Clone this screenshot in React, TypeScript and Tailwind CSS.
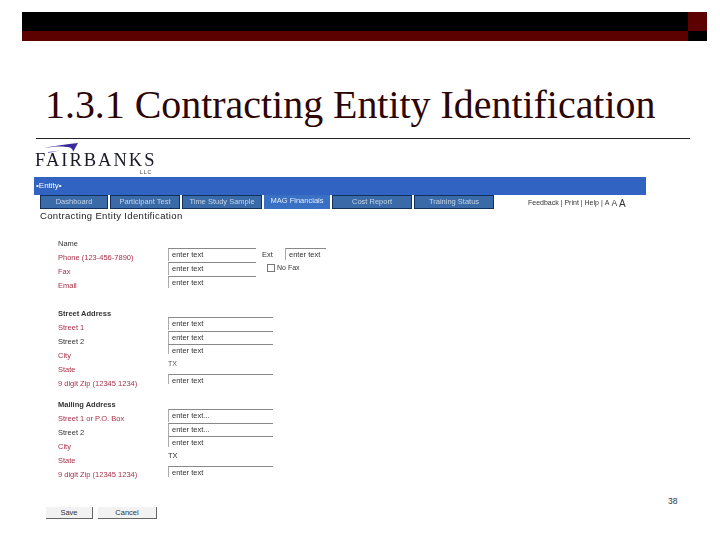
import React from "react";

const sans = "font-['Liberation_Sans',Arial,sans-serif]";

function Label({ text, red, bold, mt = "mt-0" }: { text: string; red?: boolean; bold?: boolean; mt?: string }) {
  return (
    <div className={`h-[14px] leading-[14px] text-[7.5px] whitespace-nowrap ${mt} ${red ? "text-[#a8304a]" : "text-[#333]"} ${bold ? "font-bold" : ""}`}>
      {text}
    </div>
  );
}

function Field({ w, h = "h-[13px]", text = "enter text", mt = "mt-px" }: { w: string; h?: string; text?: string; mt?: string }) {
  return (
    <div className={`${w} ${h} ${mt} border-t border-l border-t-[#888] border-l-[#aaa] pl-[3px] text-[7.5px] leading-[12px] text-[#333] overflow-hidden whitespace-nowrap`}>
      {text}
    </div>
  );
}

const tabs: { t: string; w: string; active?: boolean }[] = [
  { t: "Dashboard", w: "w-[68px]" },
  { t: "Participant Test", w: "w-[70px]" },
  { t: "Time Study Sample", w: "w-[80px]" },
  { t: "MAG Financials", w: "w-[66px]", active: true },
  { t: "Cost Report", w: "w-[80px]" },
  { t: "Training Status", w: "w-[80px]" },
];

export default function App() {
  return (
    <div className="relative w-[720px] h-[540px] overflow-hidden bg-white pt-3">
      {/* decorative header */}
      <div className="flex ml-[22px]">
        <div className="w-[666px]">
          <div className="h-[19px] bg-black" />
          <div className="h-[10px] bg-[#5c0000]" />
        </div>
        <div className="w-[19px]">
          <div className="h-[19px] bg-[#5c0000]" />
          <div className="h-[10px] bg-black" />
        </div>
      </div>

      {/* title */}
      <h1 className="mt-[42px] ml-[45px] h-[44px] text-[39.9px] leading-[44px] font-normal text-[#2c0505] whitespace-nowrap font-['Liberation_Serif','Times_New_Roman',serif]">
        1.3.1 Contracting Entity Identification
      </h1>
      <div className="mt-[11px] ml-[36px] w-[654px] h-px bg-[#222]" />

      {/* screenshot of form */}
      <div className={`ml-[34px] w-[612px] blur-[0.45px] ${sans}`}>
        {/* logo */}
        <div className="relative h-[38px]">
          <svg className="absolute left-[10px] top-[3px]" width="36" height="12" viewBox="0 0 36 12">
            <path d="M0 6 C10 4 22 2 34 1 L29 10 C29 7 27 5 22 5 C14 4 8 5 0 6Z" fill="#3a2a9c" />
            <path d="M4 10 L16 8.5 L4 11Z" fill="#6a5cc0" />
          </svg>
          <div className="absolute left-px top-[14px] text-[18.5px] leading-[15px] tracking-[2px] text-[#1a1a2a] whitespace-nowrap font-['Liberation_Serif',serif]">
            FAIRBANKS
          </div>
          <div className="absolute left-[106px] top-[30px] text-[5px] leading-[6px] tracking-[1px] text-[#333]">LLC</div>
        </div>

        {/* blue bar */}
        <div className="h-[18px] bg-[#3063c2] pl-[2px] text-[8px] leading-[17px] text-white">•Entity•</div>

        {/* tabs */}
        <div className="flex items-start">
          <div className="flex ml-[6px] gap-[2px]">
            {tabs.map((tab) => (
              <div
                key={tab.t}
                className={`${tab.w} h-[14px] text-center text-[7.5px] leading-[12px] whitespace-nowrap text-[#c4d4e8] ${
                  tab.active ? "bg-[#3a70c4] text-[#e4ecf6]" : "bg-[#3a6ba8] border border-[#12305c]"
                }`}
              >
                {tab.t}
              </div>
            ))}
          </div>
          <div className="ml-[34px] flex items-center h-[16px] text-[7px] text-[#333] whitespace-nowrap">
            Feedback | Print | Help |
            <span className="ml-[2px] text-[7px]">A</span>
            <span className="ml-[2px] text-[8.5px]">A</span>
            <span className="ml-[2px] text-[10px]">A</span>
          </div>
        </div>

        <div className="ml-[6px] mt-[-1px] text-[9.5px] leading-[12px] tracking-[0.35px] text-[#222]">Contracting Entity Identification</div>

        {/* form columns */}
        <div className="flex mt-[15px] ml-[24px]">
          <div className="w-[110px]">
            <Label text="Name" />
            <Label text="Phone (123-456-7890)" red />
            <Label text="Fax" red />
            <Label text="Email" red />
            <Label text="Street Address" bold mt="mt-[14px]" />
            <Label text="Street 1" red />
            <Label text="Street 2" />
            <Label text="City" red />
            <Label text="State" red />
            <Label text="9 digit Zip (12345 1234)" red />
            <Label text="Mailing Address" bold mt="mt-[7px]" />
            <Label text="Street 1 or P.O. Box" red />
            <Label text="Street 2" />
            <Label text="City" red />
            <Label text="State" red />
            <Label text="9 digit Zip (12345 1234)" red />
          </div>

          <div className="mt-[11px]">
            <div className="flex h-[13px]">
              <Field w="w-[88px]" mt="mt-0" />
              <span className="ml-[6px] w-[23px] text-[7.5px] leading-[13px] text-[#333]">Ext</span>
              <Field w="w-[41px]" h="h-[12px]" mt="mt-0" />
            </div>
            <div className="flex h-[14px]">
              <Field w="w-[88px]" />
              <div className="ml-[11px] mt-[3px] flex items-start text-[7px] leading-[8px] text-[#333]">
                <span className="w-[8px] h-[8px] border border-[#777] mr-[2px]" />
                No Fax
              </div>
            </div>
            <Field w="w-[88px]" h="h-[12px]" />

            <Field w="w-[105px]" mt="mt-[29px]" />
            <Field w="w-[105px]" />
            <Field w="w-[105px]" h="h-[10px]" mt="mt-0" />
            <div className="mt-[4px] h-[12px] text-[7px] leading-[12px] text-[#555]">TX</div>
            <Field w="w-[105px]" h="h-[10px]" mt="mt-[4px]" />

            <Field w="w-[105px]" mt="mt-[25px]" text="enter text..." />
            <Field w="w-[105px]" text="enter text..." />
            <Field w="w-[105px]" h="h-[11px]" mt="mt-0" />
            <div className="mt-[3px] h-[12px] text-[7.5px] leading-[12px] text-[#333]">TX</div>
            <Field w="w-[105px]" h="h-[11px]" mt="mt-[4px]" />
          </div>
        </div>

        {/* buttons */}
        <div className="flex mt-[25px] ml-[12px] gap-[5px]">
          <div className="w-[47px] h-[12px] bg-[#f2f2f2] border-r border-b border-[#666] text-center text-[7.5px] leading-[11px] text-[#333]">Save</div>
          <div className="w-[59px] h-[12px] bg-[#f2f2f2] border-r border-b border-[#666] text-center text-[7.5px] leading-[11px] text-[#333]">Cancel</div>
        </div>
      </div>

      {/* slide number */}
      <div className={`absolute left-[668px] top-[496px] text-[8.5px] leading-[10px] text-[#333] ${sans}`}>38</div>
    </div>
  );
}
